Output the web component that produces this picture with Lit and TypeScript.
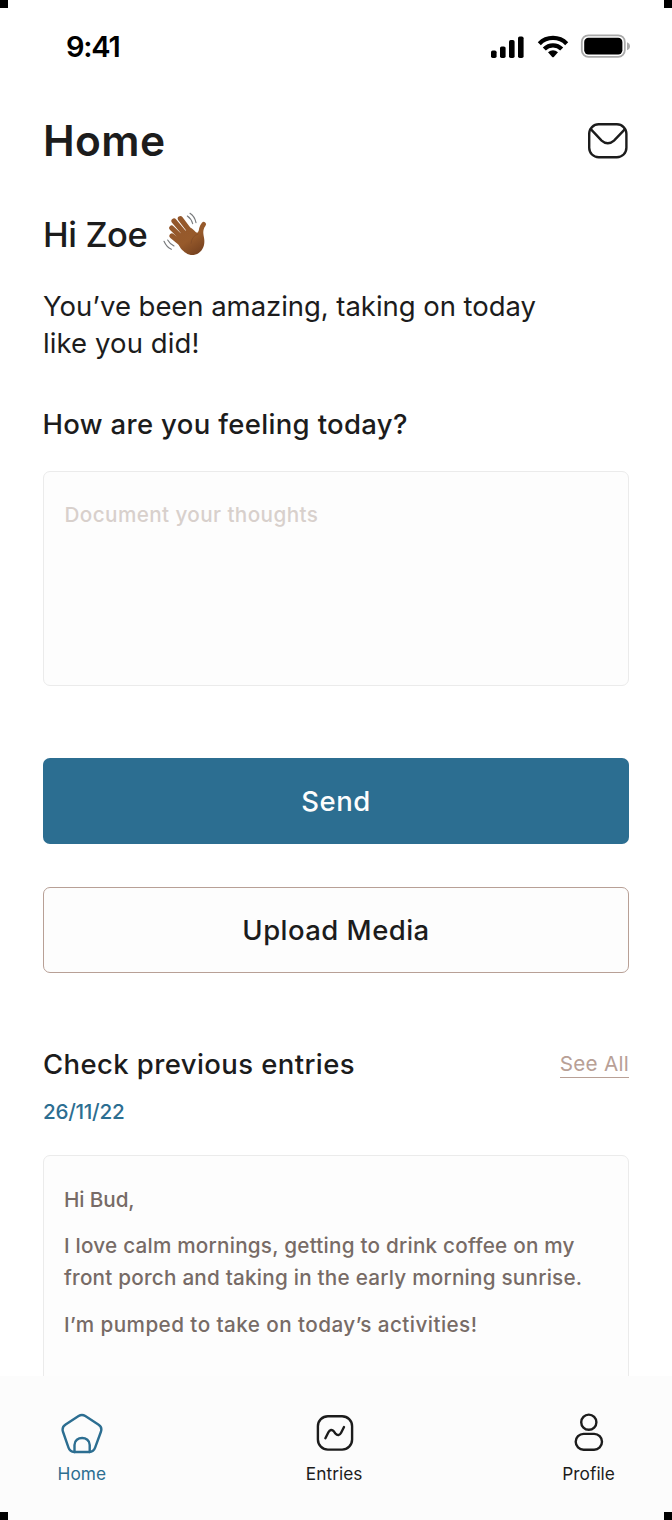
import { LitElement, html, css, svg } from "lit";
import { customElement, property } from "lit/decorators.js";

const icons = {
  mail: svg`<rect x="1.2" y="1.3" width="37.2" height="33" rx="9.5"/><path d="M2.8 6.2 13.600 17.600C17.800 21.300 21.800 21.300 26 17.600L37 6.200"/>`,
  home: svg`<path d="M17.6 3.1 4.6 11.6C1.8 13.4 1 15.400 1.900 18.500L7.500 34.700C8.600 37.900 10.100 39 13.200 39H28.400C31.500 39 33 37.900 34.100 34.700L40 18.500C41 15.400 40.100 13.400 37.300 11.600L24.300 3.100C21.900 1.500 20 1.500 17.600 3.100Z"/><path d="M13.500 39V32C13.500 22.700 28.700 22.700 28.700 32V39"/>`,
  entries: svg`<rect x="4.900" y="3.200" width="34.200" height="33.400" rx="10"/><path d="M12.400 25.300 15.400 19.300C16.800 16.500 19 16.200 21 18.600L22.400 20.500C24.400 22.900 26.700 22.500 28.100 19.800L31 14"/>`,
  profile: svg`<circle cx="20.800" cy="9.200" r="7.600"/><rect x="7.700" y="20.900" width="26.300" height="15.800" rx="7.900"/>`,
};

@customElement("status-bar")
class StatusBar extends LitElement {
  static styles = css`
    :host { display: flex; justify-content: space-between; align-items: flex-start; padding: 26.5px 42px 0 66px; height: 88.500px; box-sizing: border-box; }
    .time { font-size: 29px; line-height: 40px; font-weight: 600; letter-spacing: -1.250px; color: #000; }
    .symbols { display: block; margin-top: 7px; }
  `;
  render() {
    return html`
      <span class="time">9:41</span>
      <svg class="symbols" width="140" height="25" viewBox="0 0 140 25">
        <rect x="1" y="16.500" width="5.600" height="7.400" rx="1.700"/>
        <rect x="10" y="12.400" width="5.600" height="11.500" rx="1.700"/>
        <rect x="19" y="6" width="5.600" height="17.900" rx="1.700"/>
        <rect x="28" y="2.500" width="5.600" height="21.400" rx="1.700"/>
        <g fill="none" stroke="#000" stroke-width="4.300">
          <path d="M49.300 9.700A19.200 19.200 0 0 1 76.700 9.700"/>
          <path d="M54.300 14.900A12.300 12.300 0 0 1 71.700 14.900"/>
        </g>
        <path d="M58 18.300Q63 14 68 18.300L63.800 23Q63 23.700 62.200 23Z"/>
        <rect x="91.800" y="1.300" width="43" height="21.600" rx="6.600" fill="none" stroke="#a9a9a9" stroke-width="1.800"/>
        <rect x="94.200" y="3.800" width="38.200" height="16.600" rx="4.200"/>
        <path d="M137 8.200Q140 9.300 140 12.200T137 16.200Z" fill="#a9a9a9"/>
      </svg>`;
  }
}

@customElement("waving-hand")
class WavingHand extends LitElement {
  static styles = css`:host, svg { display: block; }`;
  render() {
    return html`<svg width="45" height="44" viewBox="37 37 135 132">
      <defs><linearGradient id="skin" x1="60" y1="50" x2="135" y2="165" gradientUnits="userSpaceOnUse">
        <stop offset="0" stop-color="#93572c"/><stop offset=".65" stop-color="#975a2b"/><stop offset="1" stop-color="#784320"/>
      </linearGradient></defs>
      <g fill="none" stroke="url(#skin)" stroke-linecap="round">
        <path stroke-width="15.500" d="M89 57 124 103M70 64 112 114M63 85 105 126M64 109 108 145"/>
        <path stroke-width="14" d="M159 74Q150 84 150 108"/>
      </g>
      <path fill="url(#skin)" d="M88 102 120 84C128 88 134 97 139 99C144 98 145 93 147 88L157 92C157 108 164 120 160 136C156 153 144 164 129 166C111 167 101 157 91 147L84 136Z"/>
      <path d="M143 103Q123 109 121 132" fill="none" stroke="#7c4826" stroke-width="1.800"/>
      <g fill="none" stroke="#77797b" stroke-width="3.400" stroke-linecap="round">
        <path d="M118 41Q132 50 136 69M110 49Q122 57 126 72M40 125Q48 143 62 149M51 121Q57 132 70 139"/>
      </g>
    </svg>`;
  }
}

@customElement("tab-item")
class TabItem extends LitElement {
  @property() icon: "home" | "entries" | "profile" = "home";
  @property() label = "";
  static styles = css`
    :host { display: flex; flex-direction: column; align-items: center; color: #1c1c1c; }
    :host([active]) { color: #2c6e91; }
    svg { display: block; fill: none; stroke: currentColor; stroke-width: 2.400; stroke-linecap: round; stroke-linejoin: round; }
    .label { margin-top: 8.400px; font-size: 17.300px; line-height: 22px; letter-spacing: .050px; }
  `;
  render() {
    return html`<svg width="42" height="42" viewBox="0 0 42 42">${icons[this.icon]}</svg><span class="label">${this.label}</span>`;
  }
}

@customElement("app-root")
class AppRoot extends LitElement {
  static styles = css`
    :host { display: flex; flex-direction: column; position: relative; width: 672px; height: 1520px; overflow: hidden; background: #fff; color: #1c1c1c; font-family: Inter, "Liberation Sans", sans-serif; font-weight: 400; }
    * { box-sizing: border-box; }
    h1, h2, h3, p { margin: 0; }
    .corner { position: absolute; width: 8px; height: 8px; background: #000; }
    .top { top: 0; } .bottom { bottom: 0; } .left { left: 0; } .right { right: 0; }
    main { flex: 1; min-height: 0; overflow: hidden; display: flex; flex-direction: column; padding: 26.500px 43px 0; }
    header { display: flex; justify-content: space-between; align-items: center; height: 52px; padding-right: 1.500px; flex: none; }
    h1 { font-size: 42.500px; line-height: 52px; font-weight: 600; letter-spacing: .350px; }
    .mail { display: block; fill: none; stroke: #1c1c1c; stroke-width: 2.400; stroke-linecap: round; }
    .greeting { display: flex; height: 44px; margin-top: 46px; gap: 16px; align-items: center; flex: none; }
    waving-hand { margin-bottom: 2px; }
    h2 { font-size: 34.500px; line-height: 44px; font-weight: 500; letter-spacing: -.400px; }
    .praise { margin-top: 30.800px; font-size: 27.500px; line-height: 37.500px; width: 520px; flex: none; letter-spacing: -.050px; }
    .second { letter-spacing: .100px; }
    h3 { font-size: 27.500px; line-height: 38px; font-weight: 500; letter-spacing: .400px; }
    .question { margin-top: 41.900px; flex: none; letter-spacing: .330px; margin-left: -.500px; }
    .thoughts { flex: none; height: 215px; margin-top: 28.500px; padding: 26.500px 20.500px; border: 1.500px solid #ebebeb; border-radius: 7px; background: #fdfdfd; font-size: 20.700px; line-height: 32px; font-weight: 500; letter-spacing: .400px; color: #d8d0cc; }
    button { flex: none; display: flex; align-items: center; justify-content: center; height: 86px; padding: 0; border: 0; border-radius: 7px; font-family: inherit; font-size: 27.500px; line-height: 38px; font-weight: 500; letter-spacing: .450px; }
    .send { margin-top: 71.500px; background: #2c6e91; color: #fdfdfd; }
    .upload { margin-top: 43px; border: 1.500px solid #b8a096; background: #fdfdfd; color: #1c1c1c; }
    .heading { flex: none; display: flex; justify-content: space-between; margin-top: 72.700px; height: 38px; }
    .all { align-self: flex-start; margin-top: 3px; height: 30px; border-bottom: 1.500px solid #b8a096; color: #b8a096; font-size: 20.700px; line-height: 32px; letter-spacing: .250px; }
    .date { flex: none; margin-top: 14.700px; color: #2c6e91; font-size: 20.700px; line-height: 28px; font-weight: 500; letter-spacing: -.300px; }
    .entry { flex: none; display: flex; flex-direction: column; gap: 14px; height: 260px; margin-top: 28.600px; padding: 28px 20px; border: 1.500px solid #ebebeb; border-radius: 7px; background: #fdfdfd; color: #776b66; font-size: 20.700px; line-height: 32.400px; font-weight: 500; letter-spacing: .220px; }
    .salute { letter-spacing: -.100px; }
    .pumped { letter-spacing: .430px; }
    nav { flex: none; display: flex; justify-content: space-between; align-items: flex-start; height: 144px; padding: 37px 57px 0 57.500px; background: #fcfcfc; }
  `;
  render() {
    return html`
      <status-bar></status-bar>
      <main>
        <header><h1>Home</h1><svg class="mail" width="40" height="36" viewBox="0 0 40 36">${icons.mail}</svg></header>
        <div class="greeting"><h2>Hi Zoe</h2><waving-hand></waving-hand></div>
        <p class="praise">You’ve been amazing, taking on today<br><span class="second">like you did!</span></p>
        <h3 class="question">How are you feeling today?</h3>
        <div class="thoughts">Document your thoughts</div>
        <button class="send">Send</button>
        <button class="upload">Upload Media</button>
        <div class="heading"><h3>Check previous entries</h3><span class="all">See All</span></div>
        <p class="date">26/11/22</p>
        <article class="entry">
          <p class="salute">Hi Bud,</p>
          <p>I love calm mornings, getting to drink coffee on my<br>front porch and taking in the early morning sunrise.</p>
          <p class="pumped">I’m pumped to take on today’s activities!</p>
        </article>
      </main>
      <nav>
        <tab-item active icon="home" label="Home"></tab-item>
        <tab-item icon="entries" label="Entries"></tab-item>
        <tab-item icon="profile" label="Profile"></tab-item>
      </nav>
      <i class="corner top left"></i><i class="corner top right"></i>
      <i class="corner bottom left"></i><i class="corner bottom right"></i>`;
  }
}
